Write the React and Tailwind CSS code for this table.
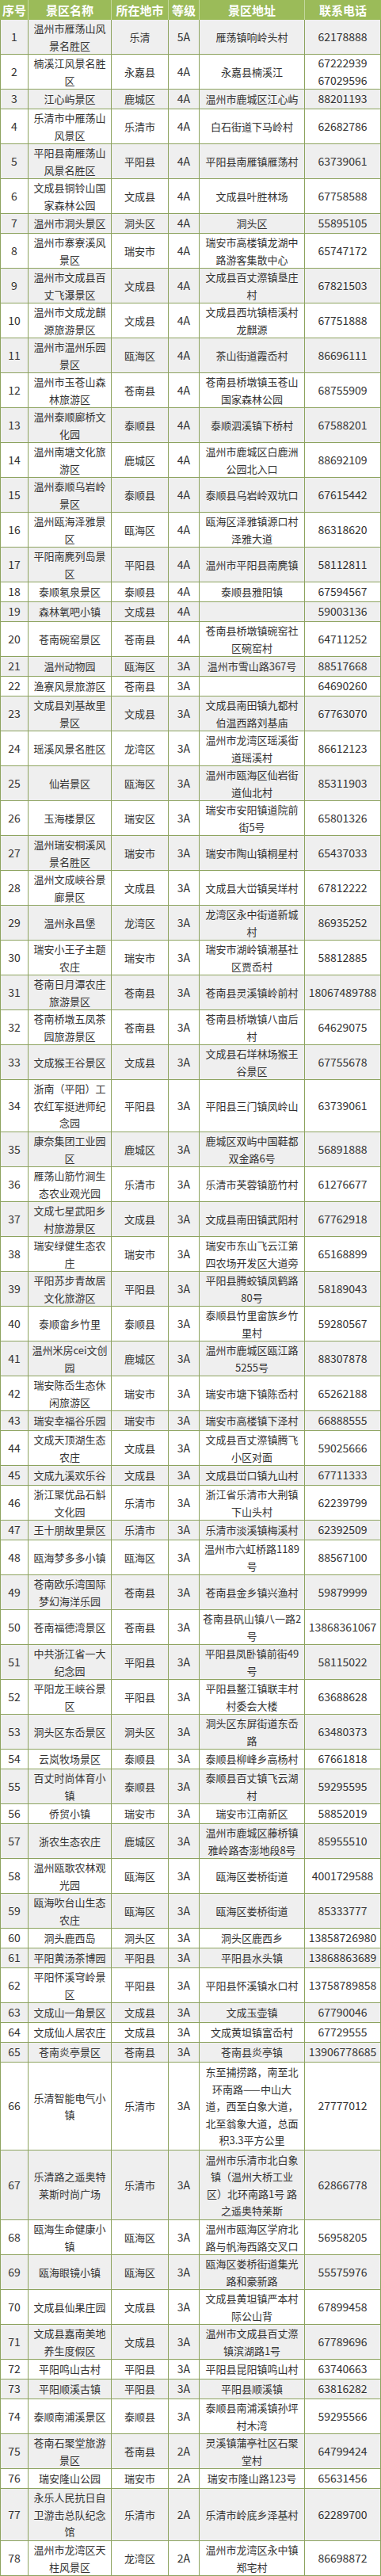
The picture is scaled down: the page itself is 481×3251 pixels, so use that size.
import React from 'react'

// 序号 | 景区名称 | 所在地市 | 等级 | 景区地址 | 联系电话
const rows = [
  ['1', '温州市雁荡山风\n景名胜区', '乐清', '5A', '雁荡镇响岭头村', '62178888'],
  ['2', '楠溪江风景名胜\n区', '永嘉县', '4A', '永嘉县楠溪江', '67222939\n67029596'],
  ['3', '江心屿景区', '鹿城区', '4A', '温州市鹿城区江心屿', '88201193'],
  ['4', '乐清市中雁荡山\n风景区', '乐清市', '4A', '白石街道下马岭村', '62682786'],
  ['5', '平阳县南雁荡山\n风景名胜区', '平阳县', '4A', '平阳县南雁镇雁荡村', '63739061'],
  ['6', '文成县铜铃山国\n家森林公园', '文成县', '4A', '文成县叶胜林场', '67758588'],
  ['7', '温州市洞头景区', '洞头区', '4A', '洞头区', '55895105'],
  ['8', '温州市寨寮溪风\n景区', '瑞安市', '4A', '瑞安市高楼镇龙湖中\n路游客集散中心', '65747172'],
  ['9', '温州市文成县百\n丈飞瀑景区', '文成县', '4A', '文成县百丈漈镇垦庄\n村', '67821503'],
  ['10', '温州市文成龙麒\n源旅游景区', '文成县', '4A', '文成县西坑镇梧溪村\n龙麒源', '67751888'],
  ['11', '温州市温州乐园\n景区', '瓯海区', '4A', '茶山街道霞岙村', '86696111'],
  ['12', '温州市玉苍山森\n林旅游区', '苍南县', '4A', '苍南县桥墩镇玉苍山\n国家森林公园', '68755909'],
  ['13', '温州泰顺廊桥文\n化园', '泰顺县', '4A', '泰顺泗溪镇下桥村', '67588201'],
  ['14', '温州南塘文化旅\n游区', '鹿城区', '4A', '温州市鹿城区白鹿洲\n公园北入口', '88692109'],
  ['15', '温州泰顺乌岩岭\n景区', '泰顺县', '4A', '泰顺县乌岩岭双坑口', '67615442'],
  ['16', '温州瓯海泽雅景\n区', '瓯海区', '4A', '瓯海区泽雅镇源口村\n泽雅大道', '86318620'],
  ['17', '平阳南麂列岛景\n区', '平阳县', '4A', '温州市平阳县南麂镇', '58112811'],
  ['18', '泰顺氡泉景区', '泰顺县', '4A', '泰顺县雅阳镇', '67594567'],
  ['19', '森林氧吧小镇', '文成县', '4A', '', '59003136'],
  ['20', '苍南碗窑景区', '苍南县', '4A', '苍南县桥墩镇碗窑社\n区碗窑村', '64711252'],
  ['21', '温州动物园', '瓯海区', '3A', '温州市雪山路367号', '88517668'],
  ['22', '渔寮风景旅游区', '苍南县', '3A', '', '64690260'],
  ['23', '文成县刘基故里\n景区', '文成县', '3A', '文成县南田镇九都村\n伯温西路刘基庙', '67763070'],
  ['24', '瑶溪风景名胜区', '龙湾区', '3A', '温州市龙湾区瑶溪街\n道瑶溪村', '86612123'],
  ['25', '仙岩景区', '瓯海区', '3A', '温州市瓯海区仙岩街\n道仙北村', '85311903'],
  ['26', '玉海楼景区', '瑞安区', '3A', '瑞安市安阳镇道院前\n街5号', '65801326'],
  ['27', '温州瑞安桐溪风\n景名胜区', '瑞安市', '3A', '瑞安市陶山镇桐星村', '65437033'],
  ['28', '温州文成峡谷景\n廊景区', '文成县', '3A', '文成县大峃镇吴垟村', '67812222'],
  ['29', '温州永昌堡', '龙湾区', '3A', '龙湾区永中街道新城\n村', '86935252'],
  ['30', '瑞安小王子主题\n农庄', '瑞安市', '3A', '瑞安市湖岭镇潮基社\n区贾岙村', '58812885'],
  ['31', '苍南日月潭农庄\n旅游景区', '苍南县', '3A', '苍南县灵溪镇岭前村', '18067489788'],
  ['32', '苍南桥墩五凤茶\n园旅游景区', '苍南县', '3A', '苍南县桥墩镇八亩后\n村', '64629075'],
  ['33', '文成猴王谷景区', '文成县', '3A', '文成县石垟林场猴王\n谷景区', '67755678'],
  ['34', '浙南（平阳）工\n农红军挺进师纪\n念园', '平阳县', '3A', '平阳县三门镇凤岭山', '63739061'],
  ['35', '康奈集团工业园\n区', '鹿城区', '3A', '鹿城区双屿中国鞋都\n双金路6号', '56891888'],
  ['36', '雁荡山筋竹涧生\n态农业观光园', '乐清市', '3A', '乐清市芙蓉镇筋竹村', '61276677'],
  ['37', '文成七星武阳乡\n村旅游景区', '文成县', '3A', '文成县南田镇武阳村', '67762918'],
  ['38', '瑞安绿健生态农\n庄', '瑞安市', '3A', '瑞安市东山飞云江第\n四农场开发区大道旁', '65168899'],
  ['39', '平阳苏步青故居\n文化旅游区', '平阳县', '3A', '平阳县腾蛟镇凤鹤路\n80号', '58189043'],
  ['40', '泰顺畲乡竹里', '泰顺县', '3A', '泰顺县竹里畲族乡竹\n里村', '59280567'],
  ['41', '温州米房cei文创\n园', '鹿城区', '3A', '温州市鹿城区瓯江路\n5255号', '88307878'],
  ['42', '瑞安陈岙生态休\n闲旅游区', '瑞安市', '3A', '瑞安市塘下镇陈岙村', '65262188'],
  ['43', '瑞安幸福谷乐园', '瑞安市', '3A', '瑞安市高楼镇下泽村', '66888555'],
  ['44', '文成天顶湖生态\n农庄', '文成县', '3A', '文成县百丈漈镇腾飞\n小区对面', '59025666'],
  ['45', '文成九溪欢乐谷', '文成县', '3A', '文成县峃口镇九山村', '67711333'],
  ['46', '浙江聚优品石斛\n文化园', '乐清市', '3A', '浙江省乐清市大荆镇\n下山头村', '62239799'],
  ['47', '王十朋故里景区', '乐清市', '3A', '乐清市淡溪镇梅溪村', '62392509'],
  ['48', '瓯海梦多多小镇', '瓯海区', '3A', '温州市六虹桥路1189\n号', '88567100'],
  ['49', '苍南欧乐湾国际\n梦幻海洋乐园', '苍南县', '3A', '苍南县金乡镇兴渔村', '59879999'],
  ['50', '苍南福德湾景区', '苍南县', '3A', '苍南县矾山镇八一路2\n号', '13868361067'],
  ['51', '中共浙江省一大\n纪念园', '平阳县', '3A', '平阳县凤卧镇前街49\n号', '58115022'],
  ['52', '平阳龙王峡谷景\n区', '平阳县', '3A', '平阳县鳌江镇联丰村\n村委会大楼', '63688628'],
  ['53', '洞头区东岙景区', '洞头区', '3A', '洞头区东屏街道东岙\n路', '63480373'],
  ['54', '云岚牧场景区', '泰顺县', '3A', '泰顺县柳峰乡高杨村', '67661818'],
  ['55', '百丈时尚体育小\n镇', '泰顺县', '3A', '泰顺县百丈镇飞云湖\n村', '59295595'],
  ['56', '侨贸小镇', '瑞安市', '3A', '瑞安市江南新区', '58852019'],
  ['57', '浙农生态农庄', '鹿城区', '3A', '温州市鹿城区藤桥镇\n雅岭路杏澎地段8号', '85955510'],
  ['58', '温州瓯歌农林观\n光园', '瓯海区', '3A', '瓯海区娄桥街道', '4001729588'],
  ['59', '瓯海吹台山生态\n农庄', '瓯海区', '3A', '瓯海区娄桥街道', '85333777'],
  ['60', '洞头鹿西岛', '洞头区', '3A', '洞头区鹿西乡', '13858726980'],
  ['61', '平阳黄汤茶博园', '平阳县', '3A', '平阳县水头镇', '13868863689'],
  ['62', '平阳怀溪穹岭景\n区', '平阳县', '3A', '平阳县怀溪镇水口村', '13758789858'],
  ['63', '文成山一角景区', '文成县', '3A', '文成玉壶镇', '67790046'],
  ['64', '文成仙人居农庄', '文成县', '3A', '文成黄坦镇富岙村', '67729555'],
  ['65', '苍南炎亭景区', '苍南县', '3A', '苍南县炎亭镇', '13906778685'],
  ['66', '乐清智能电气小\n镇', '乐清市', '3A', '东至捕捞路，南至北\n环南路——中山大\n道，西至白象大道，\n北至翁象大道，总面\n积3.3平方公里', '27777012'],
  ['67', '乐清路之遥奥特\n莱斯时尚广场', '乐清市', '3A', '温州市乐清市北白象\n镇（温州大桥工业\n区）北环南路1号 路\n之遥奥特莱斯', '62866778'],
  ['68', '瓯海生命健康小\n镇', '瓯海区', '3A', '温州市瓯海区学府北\n路与帆海西路交叉口', '56958205'],
  ['69', '瓯海眼镜小镇', '瓯海区', '3A', '瓯海区娄桥街道集光\n路和豪新路', '55575976'],
  ['70', '文成县仙果庄园', '文成县', '3A', '文成县黄坦镇严本村\n际公山背', '67899458'],
  ['71', '文成县嘉南美地\n养生度假区', '文成县', '3A', '温州市文成县百丈漈\n镇滨湖路1号', '67789696'],
  ['72', '平阳鸣山古村', '平阳县', '3A', '平阳县昆阳镇鸣山村', '63740663'],
  ['73', '平阳顺溪古镇', '平阳县', '3A', '平阳县顺溪镇', '63816282'],
  ['74', '泰顺南浦溪景区', '泰顺县', '3A', '泰顺县南浦溪镇孙坪\n村木湾', '59295566'],
  ['75', '苍南石聚堂旅游\n景区', '苍南县', '2A', '灵溪镇蒲亭社区石聚\n堂村', '64799424'],
  ['76', '瑞安隆山公园', '瑞安市', '2A', '瑞安市隆山路123号', '65631456'],
  ['77', '永乐人民抗日自\n卫游击总队纪念\n馆', '乐清市', '2A', '乐清市岭底乡泽基村', '62289700'],
  ['78', '温州市龙湾区天\n柱风景区', '龙湾区', '2A', '温州市龙湾区永中镇\n郑宅村', '86698872'],
]

const heights = {
  1: 'h-[25px]',
  2: 'h-[44px]',
  3: 'h-[66px]',
  4: 'h-[88px]',
  5: 'h-[111px]',
}

const cols = 'grid grid-cols-[36px_105px_72px_39px_133px_96px]'
const cell = 'flex items-center justify-center text-center whitespace-pre-line border-r border-b border-[#8da35f] px-[2px]'

const Header = () => {
  const titles = ['序号', '景区名称', '所在地市', '等级', '景区地址', '联系电话']
  return (
    <div className={`${cols} h-[25px] bg-[#9bbb59] text-white font-bold text-[15px] leading-[25px]`}>
      {titles.map((t, i) => (
        <div key={t} className={`flex items-center justify-center border-r border-[#c4d79e] last:border-r-0 ${i === 0 ? 'border-l border-l-[#9bbb59]' : ''}`}>
          {t}
        </div>
      ))}
    </div>
  )
}

const App = () => {
  return (
    <div
      className="w-[481px] bg-white text-[#333333]"
      style={{ fontFamily: '"Noto Sans CJK SC", "Noto Sans", sans-serif' }}
    >
      <Header />
      {rows.map((r, i) => {
        const lines = Math.max(...r.map((c) => c.split('\n').length))
        return (
          <div
            key={r[0]}
            className={`${cols} ${heights[lines]} ${i % 2 === 0 ? 'bg-[#efefef]' : 'bg-white'} leading-[21.5px]`}
          >
            <div className={`${cell} border-l text-[14px]`}>{r[0]}</div>
            <div className={`${cell} text-[13px]`}>{r[1]}</div>
            <div className={`${cell} text-[13px]`}>{r[2]}</div>
            <div className={`${cell} text-[14px]`}>{r[3]}</div>
            <div className={`${cell} text-[13px]`}>{r[4]}</div>
            <div className={`${cell} text-[14px]`}>{r[5]}</div>
          </div>
        )
      })}
    </div>
  )
}

export default App
